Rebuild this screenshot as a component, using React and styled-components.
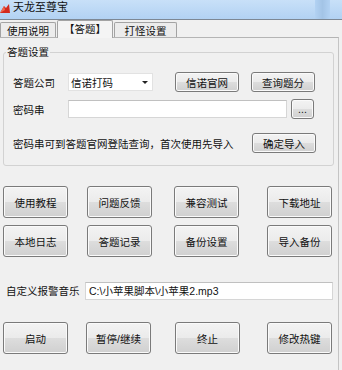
import React from "react";
import styled, { createGlobalStyle } from "styled-components";

const GlobalStyle = createGlobalStyle`
  html, body { margin: 0; padding: 0; background: #f0f0f0; }
  body {
    font-family: "Liberation Sans", "Noto Sans CJK SC", sans-serif;
    font-size: 10.5px;
    color: #1a1a1a;
  }
  * { box-sizing: border-box; }
`;

const Window = styled.div`
  width: 342px;
  height: 370px;
  overflow: hidden;
  display: flex;
  flex-direction: column;
  background: #f0f0f0;
`;

const TitleBar = styled.div`
  height: 20px;
  flex: none;
  display: flex;
  align-items: flex-start;
  gap: 3px;
  border-bottom: 1px solid #7d8894;
  background: linear-gradient(#c8e0f8, #b2d2f3);
`;

const TitleText = styled.span`
  font-size: 11px;
  line-height: 14px;
  color: #111;
`;

const CaptionEdge = styled.div`
  margin-left: auto;
  margin-right: 12px;
  width: 15px;
  height: 19px;
  background: linear-gradient(90deg, #b2d2f3, #a3c4e6 50%, #b2d2f3);
`;

const TabStrip = styled.div`
  height: 17px;
  flex: none;
  display: flex;
  align-items: flex-end;
  gap: 1px;
  position: relative;
  z-index: 1;
`;

const Tab = styled.div`
  width: ${(p) => p.$w}px;
  height: ${(p) => (p.$active ? 18 : 15)}px;
  margin-bottom: ${(p) => (p.$active ? -1 : 0)}px;
  border: 1px solid #a3a3a3;
  border-bottom: none;
  border-radius: 2px 2px 0 0;
  background: ${(p) => (p.$active ? "#f4f4f4" : "#ececec")};
  display: flex;
  align-items: center;
  justify-content: center;
  padding-bottom: ${(p) => (p.$active ? 2 : 0)}px;
  color: #111;
`;

const Panel = styled.div`
  flex: 1;
  margin-right: 3px;
  border-top: 1px solid #b4b4b4;
  border-right: 1px solid #c4c4c4;
  padding: 7px 0 0 3px;
  display: flex;
  flex-direction: column;
`;

const Group = styled.fieldset`
  margin: 0;
  width: 331px;
  border: 1px solid #d2d2d2;
  border-radius: 3px;
  padding: 0 0 12px 2px;
  display: flex;
  flex-direction: column;
`;

const Legend = styled.legend`
  padding: 0 1px;
  line-height: 14px;
  color: #111;
`;

const FormRow = styled.div`
  display: flex;
  align-items: center;
  height: ${(p) => p.$h || 20}px;
  margin-top: ${(p) => p.$mt}px;
  padding-left: 7px;
`;

const Label = styled.span`
  width: ${(p) => p.$w}px;
  flex: none;
  color: #111;
`;

const Hint = styled.span`
  flex: 1;
  color: #111;
`;

const Combo = styled.div`
  width: 85px;
  height: 18px;
  background: #fff;
  border: 1px solid #e2e2e2;
  display: flex;
  align-items: center;
  padding-left: 2px;
  color: #111;
`;

const ComboArrow = styled.span`
  margin-left: auto;
  margin-right: 4px;
  width: 0;
  height: 0;
  border-left: 3px solid transparent;
  border-right: 3px solid transparent;
  border-top: 3px solid #222;
`;

const TextBox = styled.div`
  width: ${(p) => p.$w}px;
  height: 18px;
  background: #fff;
  border: 1px solid #d6d6d6;
  border-top-color: #c0c0c0;
  display: flex;
  align-items: center;
  padding-left: 3px;
  color: #111;
  white-space: nowrap;
  overflow: hidden;
`;

const Btn = styled.button`
  width: ${(p) => p.$w || 64}px;
  height: ${(p) => p.$h || 20}px;
  margin-left: ${(p) => p.$ml || 0}px;
  margin-right: ${(p) => p.$mr || 0}px;
  padding: 0;
  font: inherit;
  color: #111;
  border: 1px solid #7a7a7a;
  border-radius: 3px;
  background: linear-gradient(#f3f3f3, #ebebeb 50%, #dddddd 51%, #d0d0d0);
  box-shadow: inset 0 0 0 1px #fafafa;
  display: flex;
  align-items: center;
  justify-content: center;
  flex: none;
`;

const ButtonGrid = styled.div`
  display: grid;
  grid-template-columns: ${(p) => p.$cols};
  row-gap: 7px;
  margin-top: ${(p) => p.$mt}px;
`;

const MusicRow = styled.div`
  display: flex;
  align-items: center;
  height: 19px;
  margin-top: 24px;
  padding-left: 3px;
`;

const AppIcon = () => (
  <svg width="10" height="12" viewBox="0 0 10 12" style={{ flex: "none", marginTop: 2 }}>
    <path d="M0 11 L4 4 L6 6 L9 2 L10 11 Z" fill="#d32a1e" />
    <path d="M0 11 L4 4 L5 8 Z" fill="#f06a50" />
  </svg>
);

export default function App() {
  const grid1 = ["使用教程", "问题反馈", "兼容测试", "下载地址", "本地日志", "答题记录", "备份设置", "导入备份"];
  const grid2 = ["启动", "暂停/继续", "终止", "修改热键"];
  return (
    <>
      <GlobalStyle />
      <Window>
        <TitleBar>
          <AppIcon />
          <TitleText>天龙至尊宝</TitleText>
          <CaptionEdge />
        </TitleBar>
        <TabStrip>
          <Tab $w={56}>使用说明</Tab>
          <Tab $w={56} $active>【答题】</Tab>
          <Tab $w={63}>打怪设置</Tab>
        </TabStrip>
        <Panel>
          <Group>
            <Legend>答题设置</Legend>
            <FormRow $mt={13}>
              <Label $w={55}>答题公司</Label>
              <Combo>
                信诺打码
                <ComboArrow />
              </Combo>
              <Btn $ml={22}>信诺官网</Btn>
              <Btn $ml={12}>查询题分</Btn>
            </FormRow>
            <FormRow $mt={7}>
              <Label $w={55}>密码串</Label>
              <TextBox $w={219} />
              <Btn $w={23} $ml={4}>...</Btn>
            </FormRow>
            <FormRow $mt={14}>
              <Hint>密码串可到答题官网登陆查询，首次使用先导入</Hint>
              <Btn $mr={17}>确定导入</Btn>
            </FormRow>
          </Group>
          <ButtonGrid $mt={20} $cols="84px 87px 93px 65px">
            {grid1.map((t) => (
              <Btn key={t} $w={65} $h={32}>{t}</Btn>
            ))}
          </ButtonGrid>
          <MusicRow>
            <Label $w={79}>自定义报警音乐</Label>
            <TextBox $w={248}>C:\小苹果脚本\小苹果2.mp3</TextBox>
          </MusicRow>
          <ButtonGrid $mt={22} $cols="83px 89px 92px 65px">
            {grid2.map((t) => (
              <Btn key={t} $w={65} $h={32}>{t}</Btn>
            ))}
          </ButtonGrid>
        </Panel>
      </Window>
    </>
  );
}
